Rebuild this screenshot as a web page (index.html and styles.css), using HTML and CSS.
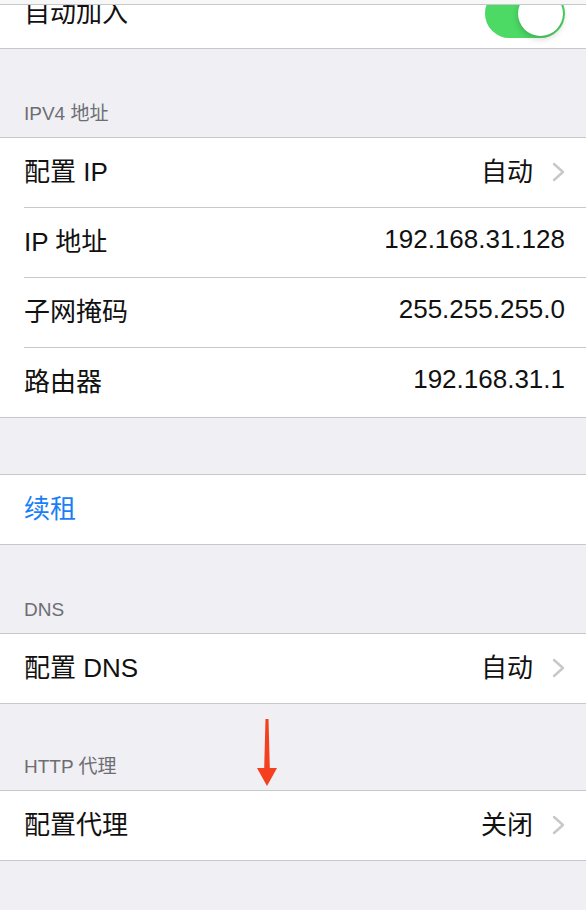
FILE: index.html
```html
<!DOCTYPE html>
<html lang="zh-CN">
<head>
    <meta charset="UTF-8">
    <meta name="viewport" content="width=device-width, initial-scale=1.0">
    <title>Wi-Fi</title>
    <link rel="stylesheet" href="styles.css">
</head>
<body>
    <div class="navbar"></div>
    <div class="page">
        <div class="group">
            <div class="row">
                <span class="label">自动加入</span>
                <span class="switch on"><span class="knob"></span></span>
            </div>
        </div>

        <div class="section-header">IPV4 地址</div>
        <div class="group">
            <div class="row">
                <span class="label">配置 IP</span>
                <span class="value">自动</span>
                <svg class="chevron" viewBox="0 0 13 20"><path d="M2 2 L11 10 L2 18"/></svg>
            </div>
            <div class="row">
                <span class="label">IP 地址</span>
                <span class="value">192.168.31.128</span>
            </div>
            <div class="row">
                <span class="label">子网掩码</span>
                <span class="value">255.255.255.0</span>
            </div>
            <div class="row">
                <span class="label">路由器</span>
                <span class="value">192.168.31.1</span>
            </div>
        </div>

        <div class="spacer"></div>
        <div class="group">
            <div class="row">
                <span class="label action">续租</span>
            </div>
        </div>

        <div class="section-header">DNS</div>
        <div class="group">
            <div class="row">
                <span class="label">配置 DNS</span>
                <span class="value">自动</span>
                <svg class="chevron" viewBox="0 0 13 20"><path d="M2 2 L11 10 L2 18"/></svg>
            </div>
        </div>

        <div class="section-header proxy">
            HTTP 代理
            <svg class="arrow" viewBox="0 0 24 70">
                <path d="M10.5 1 L13.5 1 L14.8 50 L22 50 L12 68 L2 50 L9.2 50 Z"/>
            </svg>
        </div>
        <div class="group">
            <div class="row">
                <span class="label">配置代理</span>
                <span class="value">关闭</span>
                <svg class="chevron" viewBox="0 0 13 20"><path d="M2 2 L11 10 L2 18"/></svg>
            </div>
        </div>
    </div>
</body>
</html>
```

FILE: styles.css
```css
body {
    margin: 0;
    background-color: #efeff4;
    font-family: "Liberation Sans", "Noto Sans CJK SC", sans-serif;
    color: #111;
    overflow: hidden;
}
.navbar {
    position: fixed;
    top: 0;
    left: 0;
    right: 0;
    height: 4px;
    background-color: #f7f7f7;
    border-bottom: 1px solid #c8c7cc;
    z-index: 2;
}
.page {
    margin-top: -22px;
}
.group {
    background-color: #ffffff;
    border-top: 1px solid #c8c7cc;
    border-bottom: 1px solid #c8c7cc;
}
.row {
    display: flex;
    align-items: center;
    height: 69px;
    padding: 0 21px 0 24px;
    position: relative;
}
.row + .row {
    border-top: 1px solid #c8c7cc;
    margin-left: 24px;
    padding-left: 0;
}
.label {
    flex: 1;
    font-size: 26px;
    margin-bottom: 6px;
}
.label.action {
    color: #1a7ff6;
}
.value {
    font-size: 26px;
    color: #111;
    margin-bottom: 6px;
}
.chevron {
    width: 13px;
    height: 20px;
    margin-left: 19px;
    margin-bottom: 2px;
    fill: none;
    stroke: #c7c7cc;
    stroke-width: 2.4;
    stroke-linecap: round;
    stroke-linejoin: round;
}
.switch {
    width: 80px;
    height: 49px;
    border-radius: 25px;
    background-color: #4cd964;
    position: relative;
}
.switch .knob {
    position: absolute;
    top: 2px;
    right: 2px;
    width: 45px;
    height: 45px;
    border-radius: 50%;
    background-color: #ffffff;
    box-shadow: 0 3px 6px rgba(0, 0, 0, 0.18), 0 0 1px rgba(0, 0, 0, 0.15);
}
.section-header {
    height: 88px;
    box-sizing: border-box;
    padding: 0 24px 12px;
    display: flex;
    align-items: flex-end;
    font-size: 19px;
    color: #6d6d72;
}
.section-header.proxy {
    height: 86px;
    position: relative;
}
.arrow {
    position: absolute;
    left: 255px;
    top: 14px;
    width: 24px;
    height: 70px;
    fill: #f4401f;
}
.spacer {
    height: 56px;
}
```
